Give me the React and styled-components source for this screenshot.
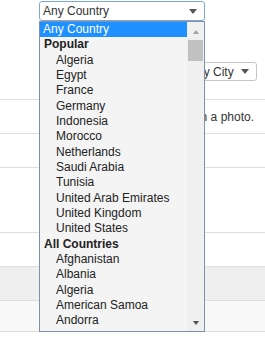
import React from "react";
import styled, { createGlobalStyle } from "styled-components";

const Global = createGlobalStyle`
  html, body { margin: 0; padding: 0; background: #fff; }
  body { font-family: "Liberation Sans", Arial, sans-serif; font-size: 12px; color: #333; }
`;

const Page = styled.div`
  position: relative;
  width: 265px;
  height: 337px;
  overflow: hidden;
  background: #fff;
`;

const Select = styled.div`
  box-sizing: border-box;
  display: flex;
  align-items: center;
  justify-content: space-between;
  height: ${(p) => p.$h}px;
  width: ${(p) => p.$w}px;
  padding: 0 7px 0 3px;
  border: 1px solid ${(p) => (p.$focus ? "#7ea6d6" : "#c6c6c6")};
  border-radius: 3px;
  background: #fff;
  color: #333;
  font-size: 12px;
  white-space: nowrap;
`;

const Arrow = styled.span`
  width: 0;
  height: 0;
  border-left: ${(p) => p.$w / 2}px solid transparent;
  border-right: ${(p) => p.$w / 2}px solid transparent;
  ${(p) => (p.$up ? "border-bottom" : "border-top")}: ${(p) => p.$h}px solid ${(p) => p.$color};
`;

const CountryWrap = styled.div`
  margin: 1px 0 0 39px;
`;

const CityRow = styled.div`
  display: flex;
  justify-content: flex-end;
  padding-right: 8px;
  margin-top: 41px;
`;

const Table = styled.div`
  margin-top: 18px;
  border-bottom: 1px solid #dedede;
`;

const Row = styled.div`
  box-sizing: border-box;
  height: ${(p) => p.$h}px;
  border-top: 1px solid #dedede;
  background: ${(p) => p.$bg || "#fff"};
  display: flex;
  align-items: center;
  justify-content: flex-end;
  padding-right: 11px;
  color: #333;
  font-size: 12px;
`;

const Dropdown = styled.div`
  position: absolute;
  left: 39px;
  top: 21px;
  width: 166px;
  height: 311px;
  box-sizing: border-box;
  border: 1px solid #8190ab;
  background: #f4f4f4;
  display: flex;
`;

const List = styled.div`
  flex: 1;
  display: flex;
  flex-direction: column;
`;

const Item = styled.div`
  height: 15.33px;
  line-height: 15.33px;
  flex: none;
  white-space: nowrap;
  font-size: 12px;
  padding-left: ${(p) => (p.$kind === "group" ? 4 : p.$kind === "selected" ? 3 : 16)}px;
  font-weight: ${(p) => (p.$kind === "group" ? "bold" : "normal")};
  background: ${(p) => (p.$kind === "selected" ? "#1e90ff" : "transparent")};
  color: ${(p) => (p.$kind === "selected" ? "#fff" : "#222")};
`;

const Scrollbar = styled.div`
  width: 17px;
  background: #f0f0f0;
  display: flex;
  flex-direction: column;
`;

const ScrollButton = styled.div`
  height: 17px;
  display: flex;
  align-items: center;
  justify-content: center;
  padding-top: ${(p) => (p.$up ? 2 : 0)}px;
  box-sizing: border-box;
`;

const Thumb = styled.div`
  margin: 1px 1px 0 1px;
  height: 21px;
  background: #c1c1c1;
`;

const Track = styled.div`
  flex: 1;
`;

const options = [
  ["selected", "Any Country"],
  ["group", "Popular"],
  ["opt", "Algeria"],
  ["opt", "Egypt"],
  ["opt", "France"],
  ["opt", "Germany"],
  ["opt", "Indonesia"],
  ["opt", "Morocco"],
  ["opt", "Netherlands"],
  ["opt", "Saudi Arabia"],
  ["opt", "Tunisia"],
  ["opt", "United Arab Emirates"],
  ["opt", "United Kingdom"],
  ["opt", "United States"],
  ["group", "All Countries"],
  ["opt", "Afghanistan"],
  ["opt", "Albania"],
  ["opt", "Algeria"],
  ["opt", "American Samoa"],
  ["opt", "Andorra"],
];

export default function App() {
  return (
    <Page>
      <Global />
      <CountryWrap>
        <Select $w={166} $h={20} $focus>
          <span>Any Country</span>
          <Arrow $w={8} $h={5} $color="#555" />
        </Select>
      </CountryWrap>
      <CityRow>
        <Select $w={72} $h={19}>
          <span>Any City</span>
          <Arrow $w={8} $h={5} $color="#555" />
        </Select>
      </CityRow>
      <Table>
        <Row $h={34}>Only show members with a photo.</Row>
        <Row $h={34} />
        <Row $h={65} />
        <Row $h={34} />
        <Row $h={34} $bg="#efefef" />
        <Row $h={31} $bg="#f9f9f9" />
      </Table>
      <Dropdown>
        <List>
          {options.map(([kind, label], i) => (
            <Item key={i} $kind={kind}>
              {label}
            </Item>
          ))}
        </List>
        <Scrollbar>
          <ScrollButton $up>
            <Arrow $up $w={7} $h={4} $color="#a3a3a3" />
          </ScrollButton>
          <Thumb />
          <Track />
          <ScrollButton>
            <Arrow $w={7} $h={4} $color="#505050" />
          </ScrollButton>
        </Scrollbar>
      </Dropdown>
    </Page>
  );
}
